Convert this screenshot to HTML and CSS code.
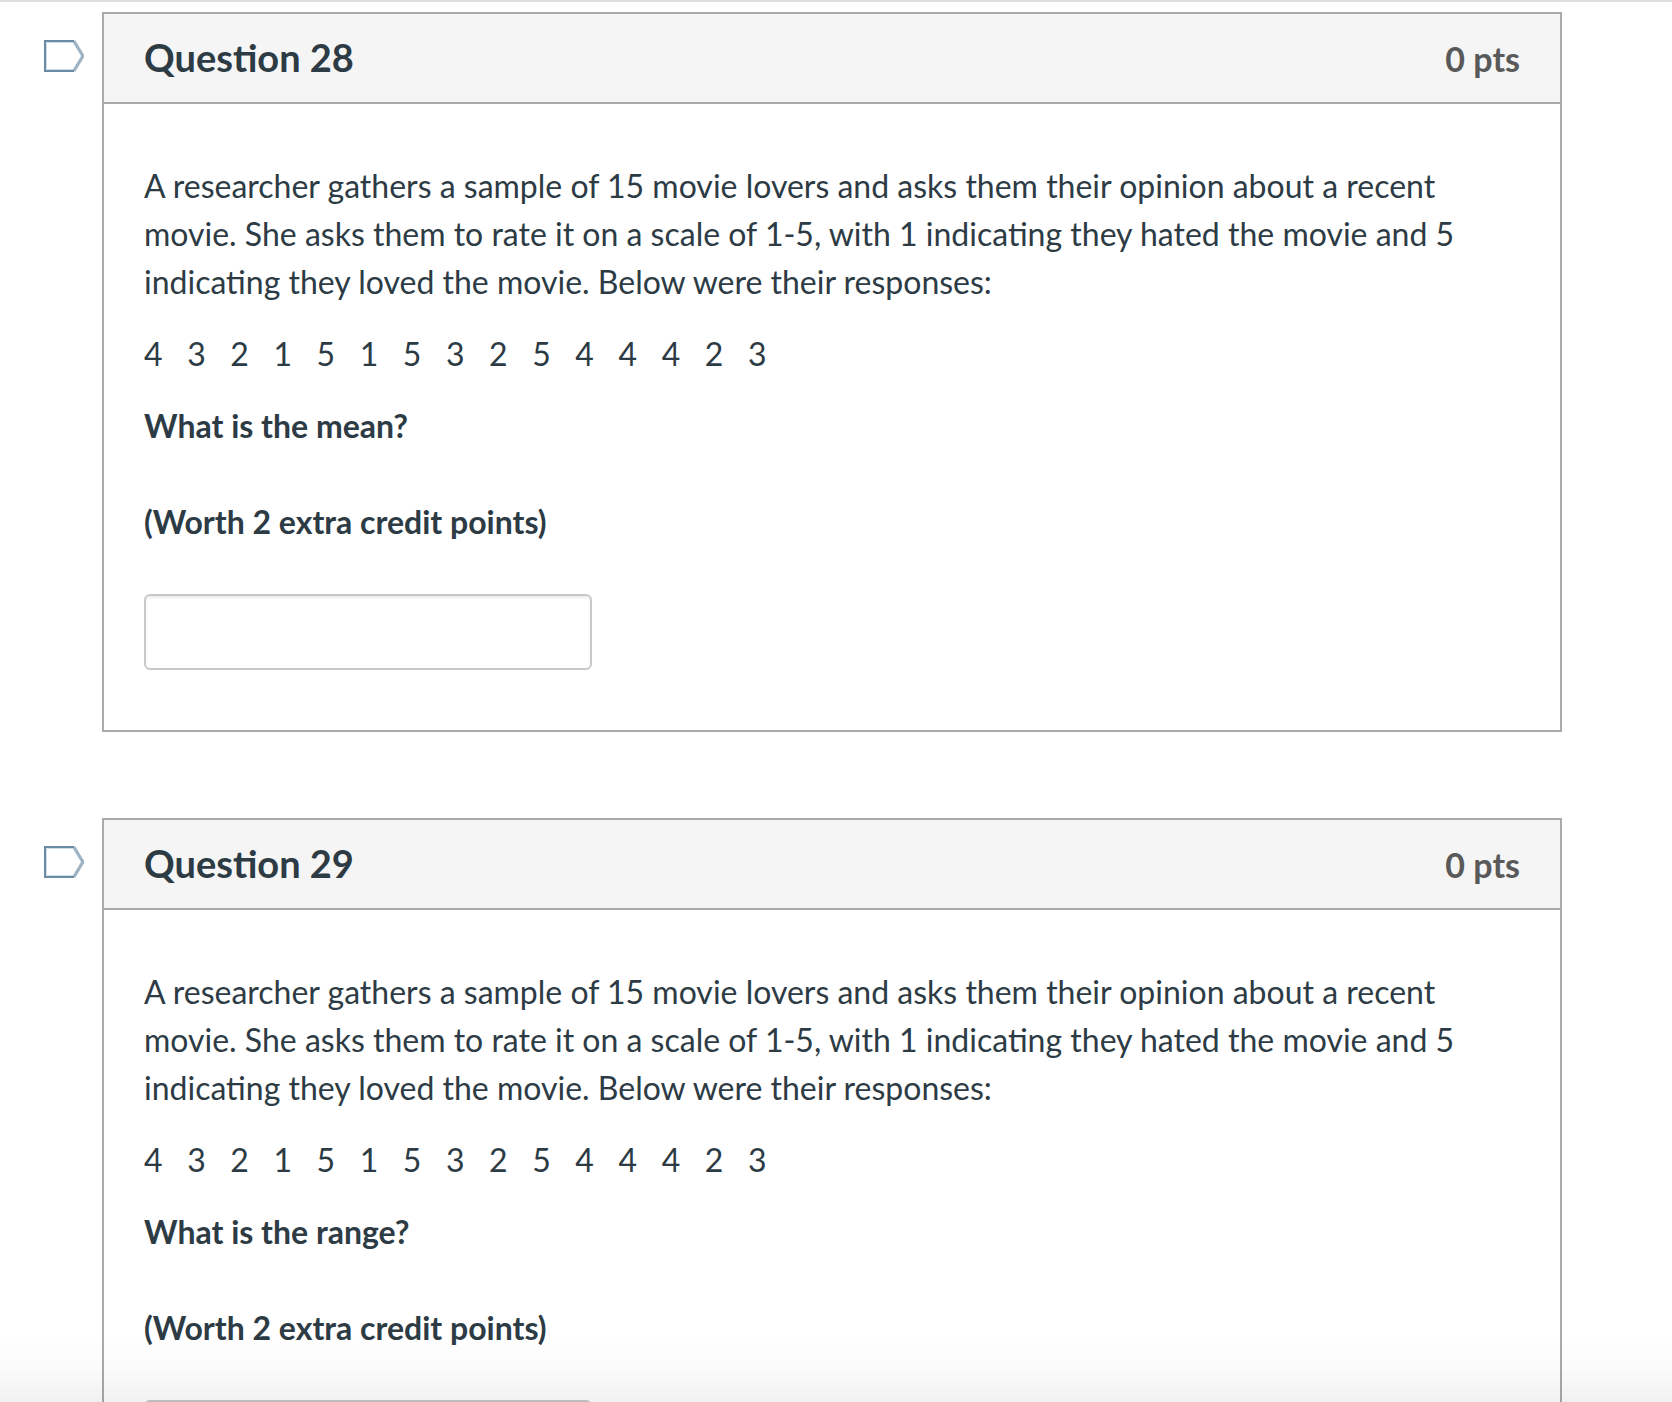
FILE: index.html
```html
<!DOCTYPE html>
<html lang="en">
<head>
  <meta charset="utf-8">
  <meta name="viewport" content="width=device-width, initial-scale=1">
  <title>Quiz</title>
  <link rel="stylesheet" href="styles.css">
</head>
<body>
  <main class="quiz">
    <section class="question">
      <button class="flag" type="button" aria-label="Flag question 28">
        <svg class="flag-icon" viewBox="0 0 40 32" aria-hidden="true">
          <path class="flag-inner" d="M2.5 2.5H29L37.5 16L29 29.5H2.5Z"/>
          <path class="flag-tip" d="M30 1L39 16L30 31"/>
          <path class="flag-outer" d="M30 1H1V31H30"/>
        </svg>
      </button>
      <article class="card">
        <header class="card-header">
          <h2 class="title">Question 28</h2>
          <span class="points">0 pts</span>
        </header>
        <div class="card-body">
          <p>A researcher gathers a sample of 15 movie lovers and asks them their opinion about a recent movie. She asks them to rate it on a scale of 1-5, with 1 indicating they hated the movie and 5 indicating they loved the movie. Below were their responses:</p>
          <p class="responses">4   3   2   1   5   1   5   3   2   5   4   4   4   2   3</p>
          <p><label for="answer-28"><strong>What is the mean?</strong></label></p>
          <p class="credit"><strong>(Worth 2 extra credit points)</strong></p>
          <input class="answer" id="answer-28" type="text">
        </div>
      </article>
    </section>

    <section class="question">
      <button class="flag" type="button" aria-label="Flag question 29">
        <svg class="flag-icon" viewBox="0 0 40 32" aria-hidden="true">
          <path class="flag-inner" d="M2.5 2.5H29L37.5 16L29 29.5H2.5Z"/>
          <path class="flag-tip" d="M30 1L39 16L30 31"/>
          <path class="flag-outer" d="M30 1H1V31H30"/>
        </svg>
      </button>
      <article class="card">
        <header class="card-header">
          <h2 class="title">Question 29</h2>
          <span class="points">0 pts</span>
        </header>
        <div class="card-body">
          <p>A researcher gathers a sample of 15 movie lovers and asks them their opinion about a recent movie. She asks them to rate it on a scale of 1-5, with 1 indicating they hated the movie and 5 indicating they loved the movie. Below were their responses:</p>
          <p class="responses">4   3   2   1   5   1   5   3   2   5   4   4   4   2   3</p>
          <p><label for="answer-29"><strong>What is the range?</strong></label></p>
          <p class="credit"><strong>(Worth 2 extra credit points)</strong></p>
          <input class="answer" id="answer-29" type="text">
        </div>
      </article>
    </section>
  </main>
  <div class="bottom-fade"></div>
</body>
</html>
```
FILE: styles.css
```css
* {
  box-sizing: border-box;
}

body {
  margin: 0;
  height: 100vh;
  overflow: hidden;
  background: #fff;
  color: #2d3b45;
  font-family: Lato, "Liberation Sans", sans-serif;
  font-size: 32px;
  line-height: 48px;
}

.quiz {
  display: flex;
  flex-direction: column;
  gap: 86px;
  padding: 10px 110px 86px 44px;
  border-top: 2px solid #dddde2;
}

.question {
  display: flex;
  align-items: flex-start;
  gap: 18px;
}

.flag {
  flex: none;
  width: 40px;
  margin: 28px 0 0;
  padding: 0;
  border: 0;
  background: none;
  cursor: pointer;
}

.flag-icon {
  display: block;
  width: 40px;
  height: 32px;
  fill: none;
}

.flag-outer {
  stroke: #6a8ba4;
  stroke-width: 2;
}

.flag-tip {
  stroke: #9db2c3;
  stroke-width: 3;
}

.flag-inner {
  stroke: #d3dde5;
  stroke-width: 1;
}

.card {
  flex: 1;
  min-width: 0;
  border: 2px solid #aaa;
}

.card-header {
  display: flex;
  align-items: baseline;
  justify-content: space-between;
  height: 90px;
  padding: 19px 40px;
  border-bottom: 2px solid #aaa;
  background: #f5f5f5;
}

.title {
  margin: 0;
  font-size: 38px;
  font-weight: 700;
}

.points {
  color: #595959;
  font-size: 34px;
  font-weight: 700;
}

.card-body {
  padding: 58px 40px 60px;
}

.card-body p {
  margin: 0 0 24px;
}

.card-body .responses {
  white-space: pre-wrap;
}

.card-body .credit {
  margin: 48px 0;
}

.answer {
  display: block;
  width: 448px;
  max-width: 100%;
  height: 76px;
  padding: 8px 16px;
  border: 2px solid #c8c8c8;
  border-radius: 6px;
  background: #fff;
  box-shadow: inset 0 2px 2px rgba(0, 0, 0, 0.08);
  color: inherit;
  font: inherit;
}

/* Shade along the lower edge of the window, over the scrolled content */
.bottom-fade {
  position: fixed;
  right: 0;
  bottom: 0;
  left: 0;
  height: 72px;
  background: linear-gradient(rgba(0, 0, 0, 0), rgba(0, 0, 0, 0.015) 55%, rgba(0, 0, 0, 0.055));
  pointer-events: none;
}
```
